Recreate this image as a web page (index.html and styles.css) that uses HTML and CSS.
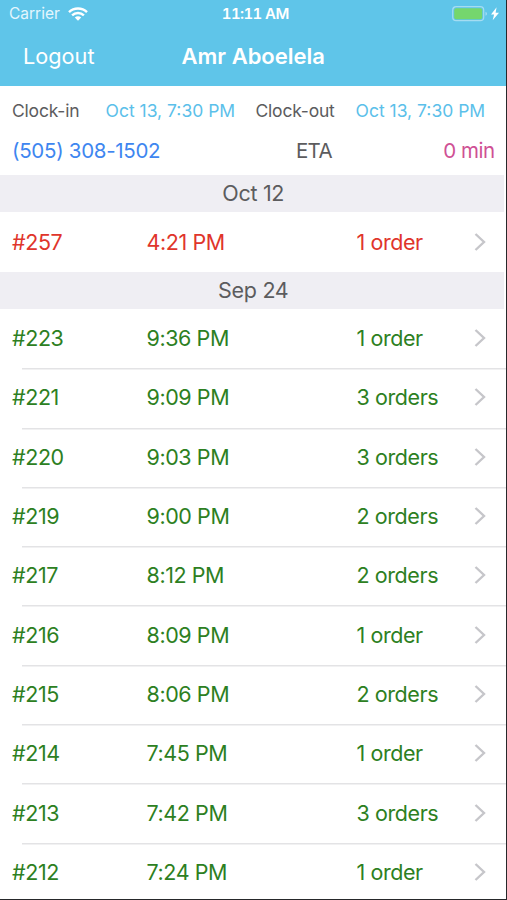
FILE: index.html
```html
<!DOCTYPE html>
<html lang="en">
<head>
  <meta charset="UTF-8" />
  <meta name="viewport" content="width=device-width, initial-scale=1.0"/>
  <title>Amr Aboelela - Orders</title>
  <link rel="stylesheet" href="styles.css">
</head>
<body>
  <div class="screen">
    <header class="topbar">
      <div class="status">
        <div class="carrier">
          <span>Carrier</span>
          <svg class="wifi" width="20" height="14" viewBox="0 0 20 14" fill="none" stroke="#fff" stroke-width="2.4">
            <path d="M1 5.1C6 0.2 14 0.2 19 5.1"/>
            <path d="M4.1 8.4C7.4 5.2 12.6 5.2 15.9 8.4"/>
            <path d="M10 13.8L6.8 10.6C8.6 8.9 11.4 8.9 13.2 10.6Z" fill="#fff" stroke="none"/>
          </svg>
        </div>
        <span class="clock">11:11 AM</span>
        <div class="power">
          <svg width="48" height="16" viewBox="0 0 48 16">
            <rect x="0.7" y="0.7" width="31" height="14" rx="3.5" fill="none" stroke="#a5dcf2" stroke-width="1.2"/>
            <rect x="2.2" y="2.2" width="28" height="11" rx="2" fill="#75d66d"/>
            <path d="M33.5 5.7C35.5 6.5 35.5 8.9 33.5 9.7Z" fill="#a5dcf2"/>
            <path d="M44.6 1.2L39 8.6H42.1L40.7 14.2L47 6.8H43.6Z" fill="#fff"/>
          </svg>
        </div>
      </div>
      <div class="nav">
        <span class="logout">Logout</span>
        <h1>Amr Aboelela</h1>
        <span></span>
      </div>
    </header>

    <div class="shift">
      <span>Clock-in</span>
      <span class="date">Oct 13, 7:30 PM</span>
      <span>Clock-out</span>
      <span class="date">Oct 13, 7:30 PM</span>
    </div>
    <div class="contact">
      <span class="phone">(505) 308-1502</span>
      <span class="eta">ETA</span>
      <span class="minutes">0 min</span>
    </div>

    <h2>Oct 12</h2>
    <div class="orders late">
      <div class="order"><span>#257</span><span>4:21 PM</span><span>1 order</span><svg class="arrow" viewBox="0 0 12 20"><path d="M1.5 2L10 10L1.5 18"/></svg></div>
    </div>

    <h2>Sep 24</h2>
    <div class="orders">
      <div class="order"><span>#223</span><span>9:36 PM</span><span>1 order</span><svg class="arrow" viewBox="0 0 12 20"><path d="M1.5 2L10 10L1.5 18"/></svg></div>
      <div class="order"><span>#221</span><span>9:09 PM</span><span>3 orders</span><svg class="arrow" viewBox="0 0 12 20"><path d="M1.5 2L10 10L1.5 18"/></svg></div>
      <div class="order"><span>#220</span><span>9:03 PM</span><span>3 orders</span><svg class="arrow" viewBox="0 0 12 20"><path d="M1.5 2L10 10L1.5 18"/></svg></div>
      <div class="order"><span>#219</span><span>9:00 PM</span><span>2 orders</span><svg class="arrow" viewBox="0 0 12 20"><path d="M1.5 2L10 10L1.5 18"/></svg></div>
      <div class="order"><span>#217</span><span>8:12 PM</span><span>2 orders</span><svg class="arrow" viewBox="0 0 12 20"><path d="M1.5 2L10 10L1.5 18"/></svg></div>
      <div class="order"><span>#216</span><span>8:09 PM</span><span>1 order</span><svg class="arrow" viewBox="0 0 12 20"><path d="M1.5 2L10 10L1.5 18"/></svg></div>
      <div class="order"><span>#215</span><span>8:06 PM</span><span>2 orders</span><svg class="arrow" viewBox="0 0 12 20"><path d="M1.5 2L10 10L1.5 18"/></svg></div>
      <div class="order"><span>#214</span><span>7:45 PM</span><span>1 order</span><svg class="arrow" viewBox="0 0 12 20"><path d="M1.5 2L10 10L1.5 18"/></svg></div>
      <div class="order"><span>#213</span><span>7:42 PM</span><span>3 orders</span><svg class="arrow" viewBox="0 0 12 20"><path d="M1.5 2L10 10L1.5 18"/></svg></div>
      <div class="order"><span>#212</span><span>7:24 PM</span><span>1 order</span><svg class="arrow" viewBox="0 0 12 20"><path d="M1.5 2L10 10L1.5 18"/></svg></div>
    </div>
  </div>
</body>
</html>
```
FILE: styles.css
```css
* {
  box-sizing: border-box;
}

body {
  margin: 0;
  height: 900px;
  overflow: hidden;
  background: #26282a;
  font-family: Inter, 'Liberation Sans', sans-serif;
  color: #5c5c5e;
  white-space: nowrap;
}

.screen {
  width: 505.5px;
  height: 898.5px;
  overflow: hidden;
  background: #fff;
}

.topbar {
  height: 86px;
  background: #5fc5e9;
  color: #fff;
}

.status {
  display: grid;
  grid-template-columns: 1fr auto 1fr;
  align-items: center;
  height: 27px;
  padding: 0 6px 0 9px;
  font-size: 15.5px;
}

.carrier {
  display: flex;
  align-items: center;
  gap: 8px;
  color: #e4f6fd;
}

.clock {
  padding-left: 2px;
  font-size: 15px;
  font-weight: 600;
  font-variant-numeric: tabular-nums;
  letter-spacing: -0.6px;
}

.power {
  display: flex;
  justify-content: flex-end;
}

.nav {
  display: grid;
  grid-template-columns: 1fr auto 1fr;
  align-items: center;
  height: 58px;
  padding: 0 22px 0 23px;
}

.logout {
  font-size: 21.7px;
}

.nav h1 {
  margin: 0;
  font-size: 22px;
  font-weight: 600;
}

.shift {
  display: grid;
  grid-template-columns: 93.5px 150px 100px 1fr;
  align-items: center;
  height: 49px;
  padding-left: 12px;
  font-size: 17.5px;
  letter-spacing: -0.2px;
}

.shift .date {
  color: #5bc0ea;
  letter-spacing: 0;
}

.contact {
  display: grid;
  grid-template-columns: 284px 1fr auto;
  align-items: center;
  height: 40px;
  padding: 0 11px 9px 12px;
  font-size: 20.5px;
  letter-spacing: -0.3px;
}

.eta {
  letter-spacing: -0.7px;
}

.phone {
  color: #3e86f0;
}

.minutes {
  color: #cf5094;
  letter-spacing: -0.5px;
}

h2 {
  margin: 0 2px 0 0;
  height: 37px;
  padding-left: 3px;
  line-height: 37px;
  background: #efeef3;
  font-size: 21.5px;
  font-weight: 400;
  letter-spacing: -0.3px;
  text-align: center;
}

.orders {
  color: #2d7f22;
}

.late {
  color: #e0352b;
}

.order {
  display: grid;
  grid-template-columns: 134.5px 210px 117.5px 12px;
  align-items: center;
  height: 59.3px;
  padding: 0 0 1px 12px;
  font-size: 21.5px;
  letter-spacing: -0.42px;
}

/* separator starts past the left edge */
.order + .order {
  background: linear-gradient(#e3e3e5, #e3e3e5) 22px 0 / 100% 1.5px no-repeat;
}

.late .order {
  height: 60px;
}

.arrow {
  width: 12px;
  height: 20px;
  fill: none;
  stroke: #c6c6ca;
  stroke-width: 2.4;
}
```
